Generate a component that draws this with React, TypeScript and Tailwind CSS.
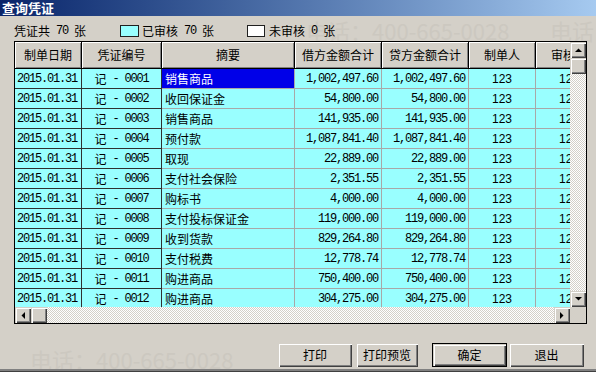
import React from 'react'

const CJK = "font-['Noto_Sans_CJK_SC',sans-serif]"
const MONO = "font-['Liberation_Mono','Noto_Sans_CJK_SC',monospace] text-[12px] tracking-[-1.2px]"

const ROWS: [string, string, string][] = [
  ['0001', '销售商品', '1,002,497.60'],
  ['0002', '收回保证金', '54,800.00'],
  ['0003', '销售商品', '141,935.00'],
  ['0004', '预付款', '1,087,841.40'],
  ['0005', '取现', '22,889.00'],
  ['0006', '支付社会保险', '2,351.55'],
  ['0007', '购标书', '4,000.00'],
  ['0008', '支付投标保证金', '119,000.00'],
  ['0009', '收到货款', '829,264.80'],
  ['0010', '支付税费', '12,778.74'],
  ['0011', '购进商品', '750,400.00'],
  ['0012', '购进商品', '304,275.00'],
]

const HEADERS: [string, string][] = [
  ['制单日期', 'w-[67px]'],
  ['凭证编号', 'w-[80px]'],
  ['摘要', 'w-[133px]'],
  ['借方金额合计', 'w-[87px]'],
  ['贷方金额合计', 'w-[87px]'],
  ['制单人', 'w-[67px]'],
  ['审核人', 'w-[67px]'],
]

const RAISED =
  'bg-[#d4d0c8] shadow-[inset_1px_1px_0_#d4d0c8,inset_2px_2px_0_#ffffff,inset_-1px_-1px_0_#404040,inset_-2px_-2px_0_#808080]'
const DITHER =
  'bg-[image:repeating-conic-gradient(#ffffff_0%_25%,#d4d0c8_0%_50%)] bg-[length:2px_2px]'

function Arrow({ dir }: { dir: 'up' | 'down' | 'left' | 'right' }) {
  const pts = {
    up: '0,4 7,4 3.5,0.5',
    down: '0,0 7,0 3.5,3.5',
    left: '4,0 4,7 0.5,3.5',
    right: '0,0 0,7 3.5,3.5',
  }[dir]
  const vertical = dir === 'up' || dir === 'down'
  return (
    <svg width={vertical ? 7 : 4} height={vertical ? 4 : 7} className="block">
      <polygon points={pts} fill="#000" />
    </svg>
  )
}

function ScrollButton({ dir }: { dir: 'up' | 'down' | 'left' | 'right' }) {
  return (
    <div className={`w-[16px] h-[16px] shrink-0 flex items-center justify-center ${RAISED}`}>
      <Arrow dir={dir} />
    </div>
  )
}

function Button({ label, width, primary }: { label: string; width: string; primary?: boolean }) {
  return (
    <div
      className={`${width} h-[24px] flex items-center justify-center text-[12px] text-black ${CJK} ${
        primary ? 'border border-black' : ''
      } ${RAISED}`}
    >
      {label}
    </div>
  )
}

// faint watermark that sits behind everything
function Mark({ pos, text }: { pos: string; text: string }) {
  return (
    <div
      className={`absolute ${pos} text-[22px] leading-[22px] text-[#ccc8c0] whitespace-nowrap pointer-events-none ${CJK}`}
    >
      {text}
    </div>
  )
}

export default function App() {
  return (
    <div className="relative w-[596px] h-[372px] bg-[#d4d0c8] overflow-hidden flex flex-col select-none">
      <Mark pos="left-[30px] top-[348px]" text="电话：400-665-0028" />
      <Mark pos="left-[306px] top-[19px]" text="电话：400-665-0028" />
      <Mark pos="left-[550px] top-[19px]" text="电话" />

      {/* title bar */}
      <div className="relative h-[16px] shrink-0 bg-gradient-to-r from-[#0a246a] to-[#a6caf0] pl-[2px] flex items-center">
        <span className={`text-white font-bold text-[13px] leading-[16px] ${CJK}`}>查询凭证</span>
      </div>

      {/* summary */}
      <div className={`relative h-[25px] shrink-0 pl-[14px] pt-[9px] flex items-start text-[12px] leading-[12px] text-black ${CJK}`}>
        <span>凭证共</span>
        <span className={`${MONO} whitespace-pre leading-[12px]`}> 70 </span>
        <span>张</span>
        <div className="ml-[34px] w-[19px] h-[12px] border border-[#202020] bg-[#99ffff]" />
        <span className="ml-[3px]">已审核</span>
        <span className={`${MONO} whitespace-pre leading-[12px]`}> 70 </span>
        <span>张</span>
        <div className="ml-[33px] w-[18px] h-[12px] border border-[#202020] bg-white" />
        <span className="ml-[4px]">未审核</span>
        <span className={`${MONO} whitespace-pre leading-[12px]`}> 0 </span>
        <span>张</span>
      </div>

      {/* grid */}
      <div className="relative ml-[14px] w-[573px] h-[283px] shrink-0 border border-black bg-[#d4d0c8] flex flex-col">
        <div className="h-[265px] flex">
          <div className="w-[555px] overflow-hidden">
            <div className="w-max">
              <div className="flex h-[27px]">
                {HEADERS.map(([label, w]) => (
                  <div
                    key={label}
                    className={`${w} shrink-0 h-[27px] border-r border-b border-black bg-[#d4d0c8] shadow-[inset_1px_1px_0_#ffffff,inset_-1px_-1px_0_#808080] flex items-center justify-center text-[12px] text-black whitespace-nowrap ${CJK}`}
                  >
                    {label}
                  </div>
                ))}
              </div>
              {ROWS.map(([no, summary, amount], i) => (
                <div key={no} className="flex h-[20px] bg-[#99ffff] text-black">
                  <div className={`w-[67px] shrink-0 border-r border-b border-[#303030] flex items-center pl-[2px] ${MONO}`}>
                    2015.01.31
                  </div>
                  <div className="w-[80px] shrink-0 border-r border-b border-[#303030] flex items-center justify-center whitespace-pre">
                    <span className={`text-[12px] ${CJK}`}>记</span>
                    <span className={MONO}> - {no}</span>
                  </div>
                  <div className="w-[133px] shrink-0 border-r border-b border-[#a8a8a8]">
                    <div
                      className={`h-full flex items-center pl-[3px] text-[12px] whitespace-nowrap ${CJK} ${
                        i === 0 ? 'bg-[#0000e8] text-white' : ''
                      }`}
                    >
                      {summary}
                    </div>
                  </div>
                  <div className={`w-[87px] shrink-0 border-r border-b border-[#a8a8a8] flex items-center justify-end pr-[3px] ${MONO}`}>
                    {amount}
                  </div>
                  <div className={`w-[87px] shrink-0 border-r border-b border-[#a8a8a8] flex items-center justify-end pr-[3px] ${MONO}`}>
                    {amount}
                  </div>
                  <div className="w-[67px] shrink-0 border-r border-b border-[#a8a8a8] flex items-center justify-center text-[12px] font-['Liberation_Sans',sans-serif]">
                    123
                  </div>
                  <div className="w-[67px] shrink-0 border-r border-b border-[#a8a8a8] flex items-center justify-center text-[12px] font-['Liberation_Sans',sans-serif]">
                    123
                  </div>
                </div>
              ))}
            </div>
          </div>
          {/* vertical scrollbar */}
          <div className={`w-[16px] flex flex-col ${DITHER}`}>
            <ScrollButton dir="up" />
            <div className={`w-[16px] h-[16px] ${RAISED}`} />
            <div className="flex-1" />
            <ScrollButton dir="down" />
          </div>
        </div>
        {/* horizontal scrollbar */}
        <div className="h-[16px] flex">
          <ScrollButton dir="left" />
          <div className={`w-[16px] h-[16px] shrink-0 ${RAISED}`} />
          <div className={`flex-1 ${DITHER}`} />
          <ScrollButton dir="right" />
          <div className="w-[16px] h-[16px] bg-[#d4d0c8]" />
        </div>
      </div>

      {/* buttons */}
      <div className="relative h-[19px] shrink-0" />
      <div className="relative h-[24px] shrink-0 flex pl-[278px]">
        <Button label="打印" width="w-[74px]" />
        <div className="w-[4px]" />
        <Button label="打印预览" width="w-[62px]" />
        <div className="w-[14px]" />
        <Button label="确定" width="w-[75px]" primary />
        <div className="w-[2px]" />
        <Button label="退出" width="w-[75px]" />
      </div>
      <div className="flex-1" />
      <div className="relative h-[2px] shrink-0 bg-[#808080]" />
      <div className="relative h-[1px] shrink-0 bg-[#404040]" />
    </div>
  )
}
